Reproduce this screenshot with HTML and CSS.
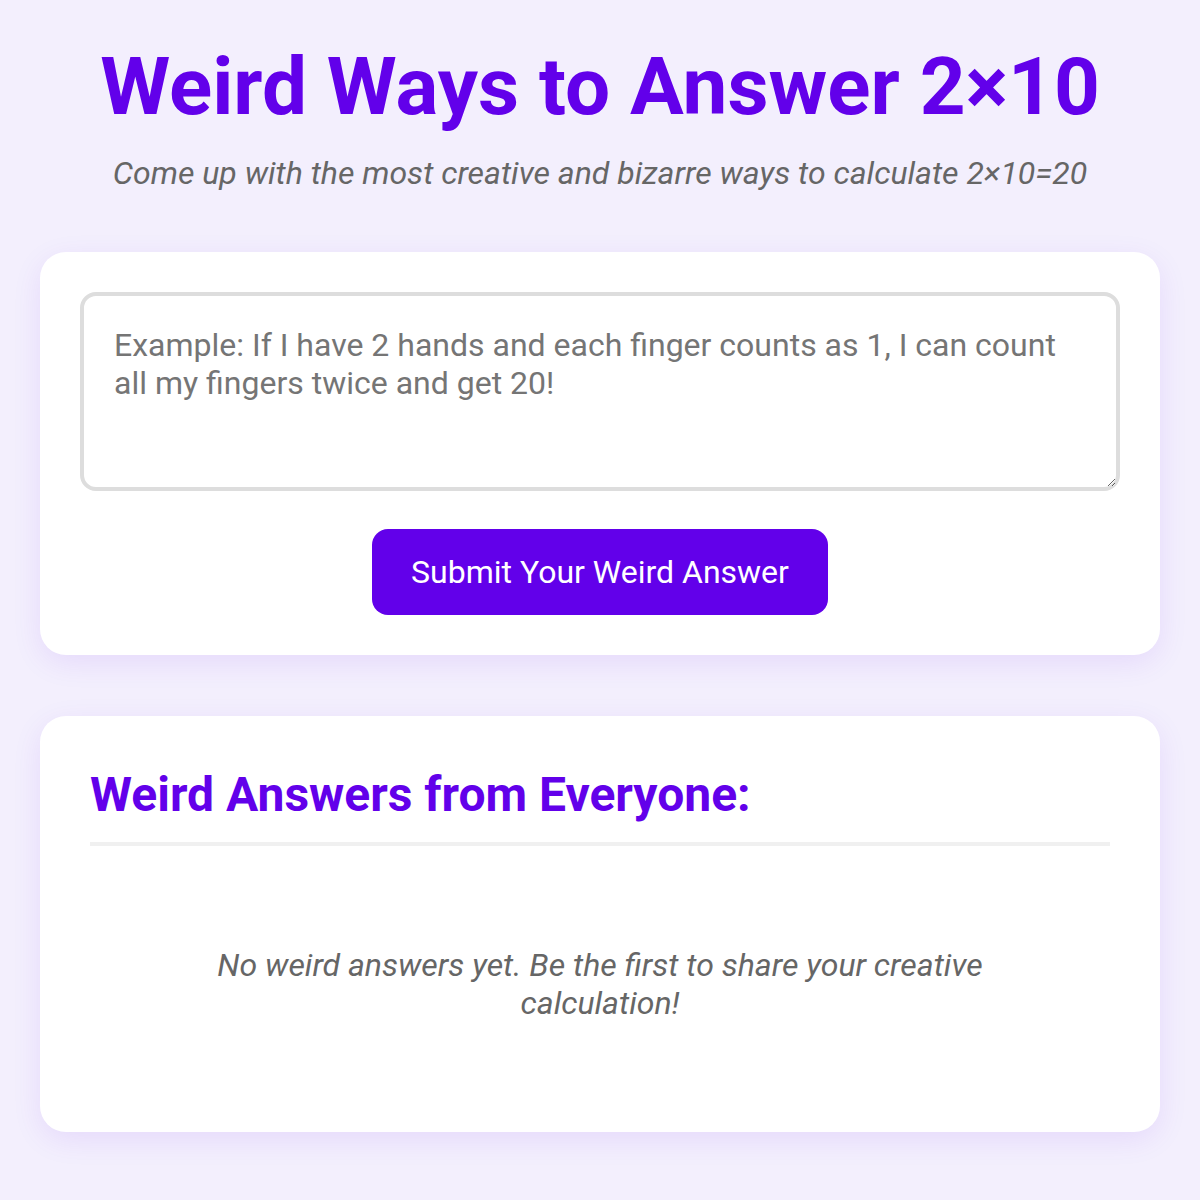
FILE: index.html
```html
<!DOCTYPE html>
<html lang="en">
<head>
<meta charset="utf-8">
<title>Weird Ways to Answer 2×10</title>
<link rel="stylesheet" href="styles.css">
</head>
<body>
  <main class="page">
    <header class="header">
      <h1 class="title">Weird Ways to Answer 2×10</h1>
      <p class="subtitle">Come up with the most creative and bizarre ways to calculate 2×10=20</p>
    </header>

    <section class="card form-card">
      <textarea class="answer-input" placeholder="Example: If I have 2 hands and each finger counts as 1, I can count all my fingers twice and get 20!"></textarea>
      <div class="actions">
        <button class="submit-btn" type="button">Submit Your Weird Answer</button>
      </div>
    </section>

    <section class="card answers-card">
      <h2 class="answers-title">Weird Answers from Everyone:</h2>
      <div class="answers-list">
        <p class="empty">No weird answers yet. Be the first to share your creative calculation!</p>
      </div>
    </section>
  </main>
</body>
</html>
```

FILE: styles.css
```css
* {
  box-sizing: border-box;
}

html, body {
  margin: 0;
  padding: 0;
}

body {
  background: #f3effd;
  font-family: Roboto, "Liberation Sans", Arial, sans-serif;
  color: #333;
}

.page {
  padding: 40px 40px;
  display: flex;
  flex-direction: column;
}

.header {
  text-align: center;
  margin-bottom: 60px;
}

.title {
  margin: 0 0 20px;
  font-size: 80px;
  font-weight: 700;
  color: #6200ea;
  line-height: normal;
}

.subtitle {
  margin: 0;
  font-size: 32px;
  font-style: italic;
  color: #666;
  line-height: normal;
}

.card {
  background: #fff;
  border-radius: 26px;
  box-shadow: 0 8px 30px rgba(98, 0, 234, 0.09);
}

.form-card {
  padding: 40px 40px 40px;
  margin-bottom: 61px;
}

.answer-input {
  display: block;
  width: 100%;
  height: 199px;
  border: 4px solid #ddd;
  border-radius: 16px;
  padding: 30px;
  font-family: Roboto, "Liberation Sans", Arial, sans-serif;
  font-size: 32px;
  line-height: normal;
  color: #333;
  resize: vertical;
  outline: none;
}

.answer-input::placeholder {
  color: #757575;
}

.actions {
  display: flex;
  justify-content: center;
  margin-top: 38px;
}

.submit-btn {
  background: #6200ea;
  color: #fff;
  border: none;
  border-radius: 16px;
  padding: 24px 39px;
  font-family: Roboto, "Liberation Sans", Arial, sans-serif;
  font-size: 32px;
  line-height: normal;
  cursor: pointer;
}

.answers-card {
  padding: 50px;
}

.answers-title {
  margin: 0;
  padding-bottom: 19px;
  border-bottom: 4px solid #f0f0f0;
  font-size: 48px;
  font-weight: 700;
  color: #6200ea;
  line-height: normal;
}

.answers-list {
  margin-top: 40px;
}

.empty {
  margin: 0;
  padding: 60px;
  text-align: center;
  font-size: 32px;
  font-style: italic;
  color: #666;
  line-height: normal;
}
```
